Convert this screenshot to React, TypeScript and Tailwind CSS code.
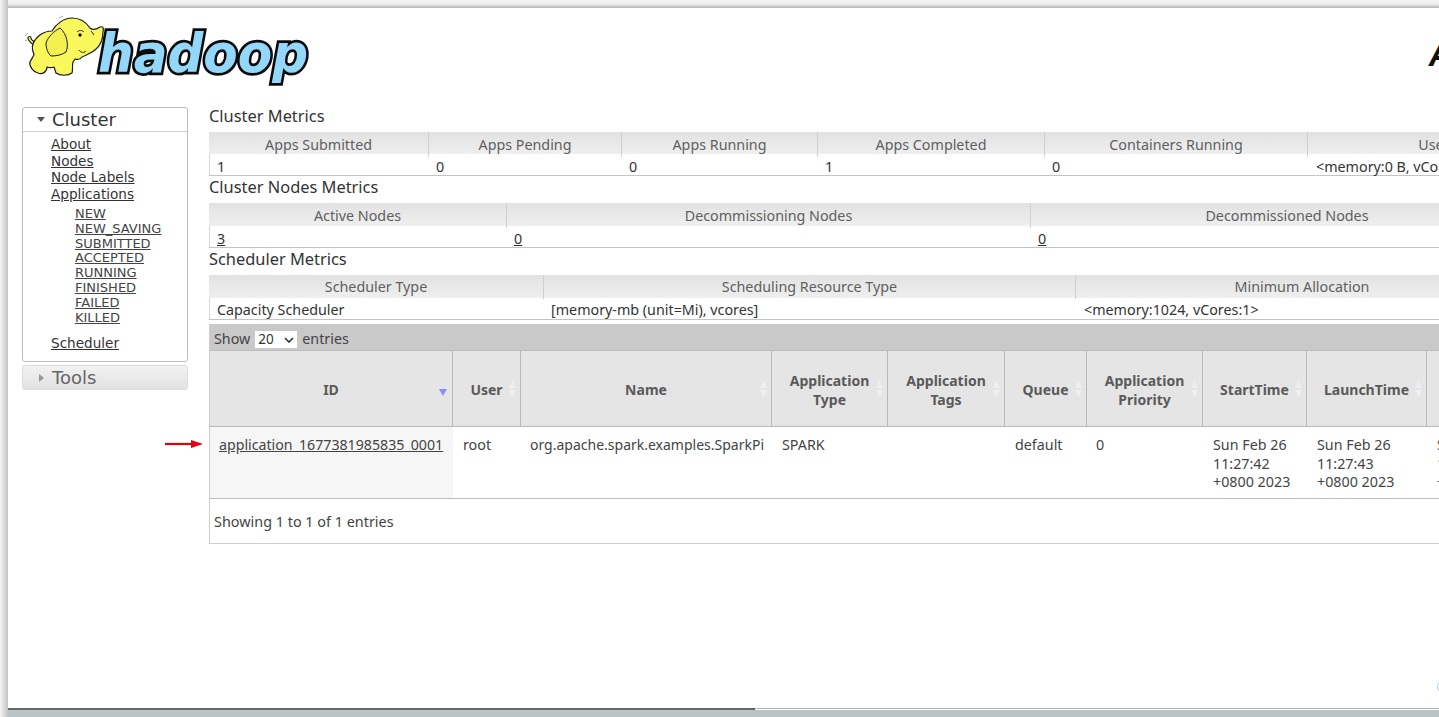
const metricCell = "border-r border-[#cfcfcf] text-center text-[#5f5f5f] last:border-r-0"
const metricHead = "grid bg-linear-to-b from-[#e2e2e2] to-[#efefef]"
const metricRow = "grid h-[21px] border-l border-[#d8d8d8] leading-[25px] text-[#333]"

function Arrow({ open }: { open?: boolean }) {
  return open ? (
    <svg width="8" height="5" viewBox="0 0 8 5" className="mr-[7px] ml-[14px] shrink-0">
      <path d="M0 0h8L4 5z" fill="#555" />
    </svg>
  ) : (
    <svg width="5" height="8" viewBox="0 0 5 8" className="mr-[8px] ml-[16px] shrink-0">
      <path d="M0 0v8l5-4z" fill="#999" />
    </svg>
  )
}

// viewBox uses page coordinates so the shapes line up with the screenshot
function Logo() {
  return (
    <svg width="296" height="72" viewBox="22 14 296 72" className="block">
      <text
        x="98"
        y="72"
        textLength="210"
        lengthAdjust="spacingAndGlyphs"
        fontFamily="'DejaVu Sans', sans-serif"
        fontWeight="700"
        fontStyle="italic"
        fontSize="53"
        fill="#93d8fb"
        stroke="#0b0b0b"
        strokeWidth="5.5"
        strokeLinejoin="miter"
        paintOrder="stroke"
      >
        hadoop
      </text>
      <g stroke="#1a1a1a" strokeWidth="1.2" strokeLinejoin="round" fill="#f8f75c">
        <path d="M34 45c-3-2-6-4-6-7 0-2 3-2 3 0 0 2 2 3 4 4z" />
        <path d="M33 44C36 36 44 31 52 31 56 24 64 18 72 18 80 18 86 22 90 28 93 31 97 29 100 27 103 26 104 28 103 32 103 40 100 46 95 50 90 54 86 55 82 57 80 60 78 60 75 59L73 62C72 66 73 70 72 73 68 76 60 76 56 73L54 67C52 68 50 68 47 67 47 72 42 75 38 73 33 72 29 66 30 62 32 58 34 56 34 54 32 50 32 47 33 44Z" />
        <path d="M60 28C54 31 48 37 46 43 46 48 48 54 51 56 56 56 62 55 66 52 69 45 67 34 60 28Z" fill="#f3f152" strokeWidth="1" />
      </g>
      <path d="M77 32c2-2 5-2 7 0" stroke="#222" strokeWidth="1" fill="none" />
      <circle cx="80" cy="35" r="1.7" fill="#111" />
      <path d="M91 31l3 4M79 50c2 3 5 3 7 1" stroke="#222" strokeWidth="1" fill="none" />
      <path d="M25 36l3-3M27 40l-2 1M59 18l4-2" stroke="#aaa" strokeWidth="1" fill="none" />
    </svg>
  )
}

function SortIcon() {
  return (
    <svg width="9" height="17" viewBox="0 0 9 17" className="absolute top-1/2 right-[3px] -translate-y-1/2">
      <path d="M4.5 0.5L8 7.5H1zM4.5 16.5L8 9.5H1z" fill="#efefef" />
    </svg>
  )
}

function AppHeader({ label, width }: { label: string; width: string }) {
  return (
    <div className={`relative flex shrink-0 items-center justify-center border-r border-[#b9b9b9] px-3 pt-[2px] text-center text-[14px] leading-[19px] font-bold text-[#5a5a5a] ${width}`}>
      <span>{label}</span>
      <SortIcon />
    </div>
  )
}

export default function App() {
  const sideLink = "block text-[13.6px] leading-[16.5px] text-[#333] underline"
  const subLink = "block text-[13px] leading-[14.8px] text-[#444] underline"

  return (
    <div className="flex h-[717px] w-[1439px] overflow-hidden" style={{ fontFamily: "'Noto Sans', 'Open Sans', sans-serif" }}>
      <div className="w-[8px] shrink-0 bg-linear-to-r from-[#f4f4f4] to-[#c4c4c4]" />
      <div className="flex min-w-0 flex-1 flex-col">
        <div className="h-[8px] shrink-0 bg-linear-to-b from-[#f4f4f4] via-[#efefef] to-[#b4b4b4]" />
        <div className="h-[700px] shrink-0 overflow-hidden bg-white">
          <div className="relative w-[1800px]">
            {/* header */}
            <div className="flex h-[99px] items-start pt-[6px] pl-[14px]">
              <Logo />
              <span className="absolute top-[30px] left-[1422px] text-[32px] leading-[32px] font-bold text-[#111] italic">A</span>
            </div>

            <div className="flex items-start">
              {/* sidebar */}
              <div className="ml-[14px] w-[166px] shrink-0" style={{ fontFamily: "'DejaVu Sans', sans-serif" }}>
                <div className="h-[255px] rounded-[3px] border border-[#bdbdbd]">
                  <div className="flex h-[24px] items-center border-b border-[#cfcfcf] text-[18px] text-[#333]">
                    <Arrow open />
                    Cluster
                  </div>
                  <div className="pt-[4px] pl-[28px]">
                    <a className={sideLink}>About</a>
                    <a className={sideLink}>Nodes</a>
                    <a className={sideLink}>Node Labels</a>
                    <a className={sideLink}>Applications</a>
                    <div className="mt-[5px] pl-[24px]">
                      <a className={subLink}>NEW</a>
                      <a className={subLink}>NEW_SAVING</a>
                      <a className={subLink}>SUBMITTED</a>
                      <a className={subLink}>ACCEPTED</a>
                      <a className={subLink}>RUNNING</a>
                      <a className={subLink}>FINISHED</a>
                      <a className={subLink}>FAILED</a>
                      <a className={subLink}>KILLED</a>
                    </div>
                    <a className={`${sideLink} mt-[10px]`}>Scheduler</a>
                  </div>
                </div>
                <div className="mt-[3px] flex h-[25px] items-center rounded-[3px] border border-[#dcdcdc] bg-linear-to-b from-[#f2f2f2] to-[#e2e2e2] text-[18px] text-[#666]">
                  <Arrow />
                  Tools
                </div>
              </div>

              {/* main */}
              <div className="ml-[21px] -mt-[1px] text-[14.3px] text-[#444]">
                <h3 className="h-[26px] text-[16.4px] leading-[20px] text-[#333]">Cluster Metrics</h3>
                <div className="w-[1426px] border-b border-[#c4c4c4]">
                  <div className={`${metricHead} h-[22px] grid-cols-[220px_193px_196px_227px_263px_1fr] leading-[25px]`}>
                    <div className={metricCell}>Apps Submitted</div>
                    <div className={metricCell}>Apps Pending</div>
                    <div className={metricCell}>Apps Running</div>
                    <div className={metricCell}>Apps Completed</div>
                    <div className={metricCell}>Containers Running</div>
                    <div className={metricCell}>Used Resources</div>
                  </div>
                  <div className={`${metricRow} grid-cols-[219px_193px_196px_227px_263px_1fr]`}>
                    <div className="pl-[7px]">1</div>
                    <div className="pl-[7px]">0</div>
                    <div className="pl-[7px]">0</div>
                    <div className="pl-[7px]">1</div>
                    <div className="pl-[7px]">0</div>
                    <div className="pl-[8px]">&lt;memory:0 B, vCores:0&gt;</div>
                  </div>
                </div>

                <h3 className="mt-[1px] h-[26px] text-[16.4px] leading-[20px] text-[#333]">Cluster Nodes Metrics</h3>
                <div className="w-[1426px] border-b border-[#c4c4c4]">
                  <div className={`${metricHead} h-[23px] grid-cols-[298px_524px_512px] leading-[25px]`}>
                    <div className={metricCell}>Active Nodes</div>
                    <div className={metricCell}>Decommissioning Nodes</div>
                    <div className={metricCell}>Decommissioned Nodes</div>
                  </div>
                  <div className={`${metricRow} grid-cols-[297px_524px_512px]`}>
                    <div className="pl-[7px]"><a className="underline">3</a></div>
                    <div className="pl-[7px]"><a className="underline">0</a></div>
                    <div className="pl-[7px]"><a className="underline">0</a></div>
                  </div>
                </div>

                <h3 className="mt-[1px] h-[26px] text-[16.4px] leading-[20px] text-[#333]">Scheduler Metrics</h3>
                <div className="w-[1426px] border-b border-[#c4c4c4]">
                  <div className={`${metricHead} h-[23px] grid-cols-[335px_532px_452px] leading-[24px]`}>
                    <div className={metricCell}>Scheduler Type</div>
                    <div className={metricCell}>Scheduling Resource Type</div>
                    <div className={metricCell}>Minimum Allocation</div>
                  </div>
                  <div className="grid h-[21px] grid-cols-[334px_532px_452px] border-l border-[#d8d8d8] leading-[23px] text-[#333]">
                    <div className="pl-[7px]">Capacity Scheduler</div>
                    <div className="pl-[7px]">[memory-mb (unit=Mi), vcores]</div>
                    <div className="pl-[8px]">&lt;memory:1024, vCores:1&gt;</div>
                  </div>
                </div>

                {/* applications table */}
                <div className="mt-[4px] w-[1426px] border-b border-l border-[#cfcfcf]">
                  <div className="flex h-[27px] items-center gap-[5px] border-b border-[#bdbdbd] bg-[#c9c9c9] pt-[4px] pl-[4px] text-[#444]">
                    <span>Show</span>
                    <span className="relative flex h-[17px] w-[42px] items-center bg-white pl-[3px] text-[13.5px] text-[#333]">
                      20
                      <svg width="10" height="6" viewBox="0 0 10 6" className="absolute top-[6px] right-[3px]">
                        <path d="M1 1l4 4 4-4" stroke="#333" strokeWidth="1.6" fill="none" />
                      </svg>
                    </span>
                    <span>entries</span>
                  </div>
                  <div className="flex h-[76px] border-b border-[#b9b9b9] bg-[#e5e5e5]">
                    <div className="relative flex w-[243px] shrink-0 items-center justify-center border-r border-[#b9b9b9] pt-[2px] text-[14px] font-bold text-[#5a5a5a]">
                      ID
                      <svg width="8" height="7" viewBox="0 0 8 7" className="absolute top-[38px] right-[5px]">
                        <path d="M0 0h8L4 7z" fill="#8c8cf5" />
                      </svg>
                    </div>
                    <AppHeader label="User" width="w-[68px]" />
                    <AppHeader label="Name" width="w-[251px]" />
                    <AppHeader label="Application Type" width="w-[116px]" />
                    <AppHeader label="Application Tags" width="w-[117px]" />
                    <AppHeader label="Queue" width="w-[82px]" />
                    <AppHeader label="Application Priority" width="w-[116px]" />
                    <AppHeader label="StartTime" width="w-[104px]" />
                    <AppHeader label="LaunchTime" width="w-[120px]" />
                    <AppHeader label="FinishTime" width="w-[120px]" />
                  </div>
                  <div className="flex h-[72px] border-b border-[#bdbdbd] leading-[18.5px] text-[#444]">
                    <div className="w-[243px] shrink-0 bg-[#f6f6f6] pt-[9px] pl-[9px] text-[14.2px]">
                      <a className="underline">application_1677381985835_0001</a>
                    </div>
                    <div className="w-[68px] shrink-0 pt-[9px] pl-[10px]">root</div>
                    <div className="w-[251px] shrink-0 pt-[9px] pl-[9px] text-[14px]">org.apache.spark.examples.SparkPi</div>
                    <div className="w-[116px] shrink-0 pt-[9px] pl-[10px]">SPARK</div>
                    <div className="w-[117px] shrink-0" />
                    <div className="w-[82px] shrink-0 pt-[9px] pl-[10px]">default</div>
                    <div className="w-[116px] shrink-0 pt-[9px] pl-[9px]">0</div>
                    <div className="w-[104px] shrink-0 pt-[9px] pl-[10px]">Sun Feb 26 11:27:42 +0800 2023</div>
                    <div className="w-[120px] shrink-0 pt-[9px] pr-[20px] pl-[10px]">Sun Feb 26 11:27:43 +0800 2023</div>
                    <div className="w-[104px] shrink-0 pt-[9px] pl-[10px]">Sun Feb 26 11:27:54 +0800 2023</div>
                  </div>
                  <div className="flex h-[44px] items-center pt-[1px] pl-[4px] text-[14.4px] text-[#444]">Showing 1 to 1 of 1 entries</div>
                </div>
              </div>
            </div>

            {/* red arrow annotation */}
            <svg width="40" height="12" viewBox="0 0 40 12" className="absolute top-[430px] left-[157px]">
              <path d="M0 6h30" stroke="#e3000f" strokeWidth="2.2" />
              <path d="M26 2l12 4-12 4z" fill="#e3000f" />
            </svg>
            {/* floating widget peeking in at the right edge */}
            <div className="absolute top-[672px] left-[1429px] h-[14px] w-[14px] rounded-full border border-[#a9c8ea]" />
          </div>
        </div>
        <div className="flex h-[2px] shrink-0">
          <div className="w-[747px] bg-[#666]" />
          <div className="flex-1 border-t border-[#b4b4b4] bg-white" />
        </div>
        <div className="flex-1 bg-[#b8c4c6]" />
      </div>
    </div>
  )
}
